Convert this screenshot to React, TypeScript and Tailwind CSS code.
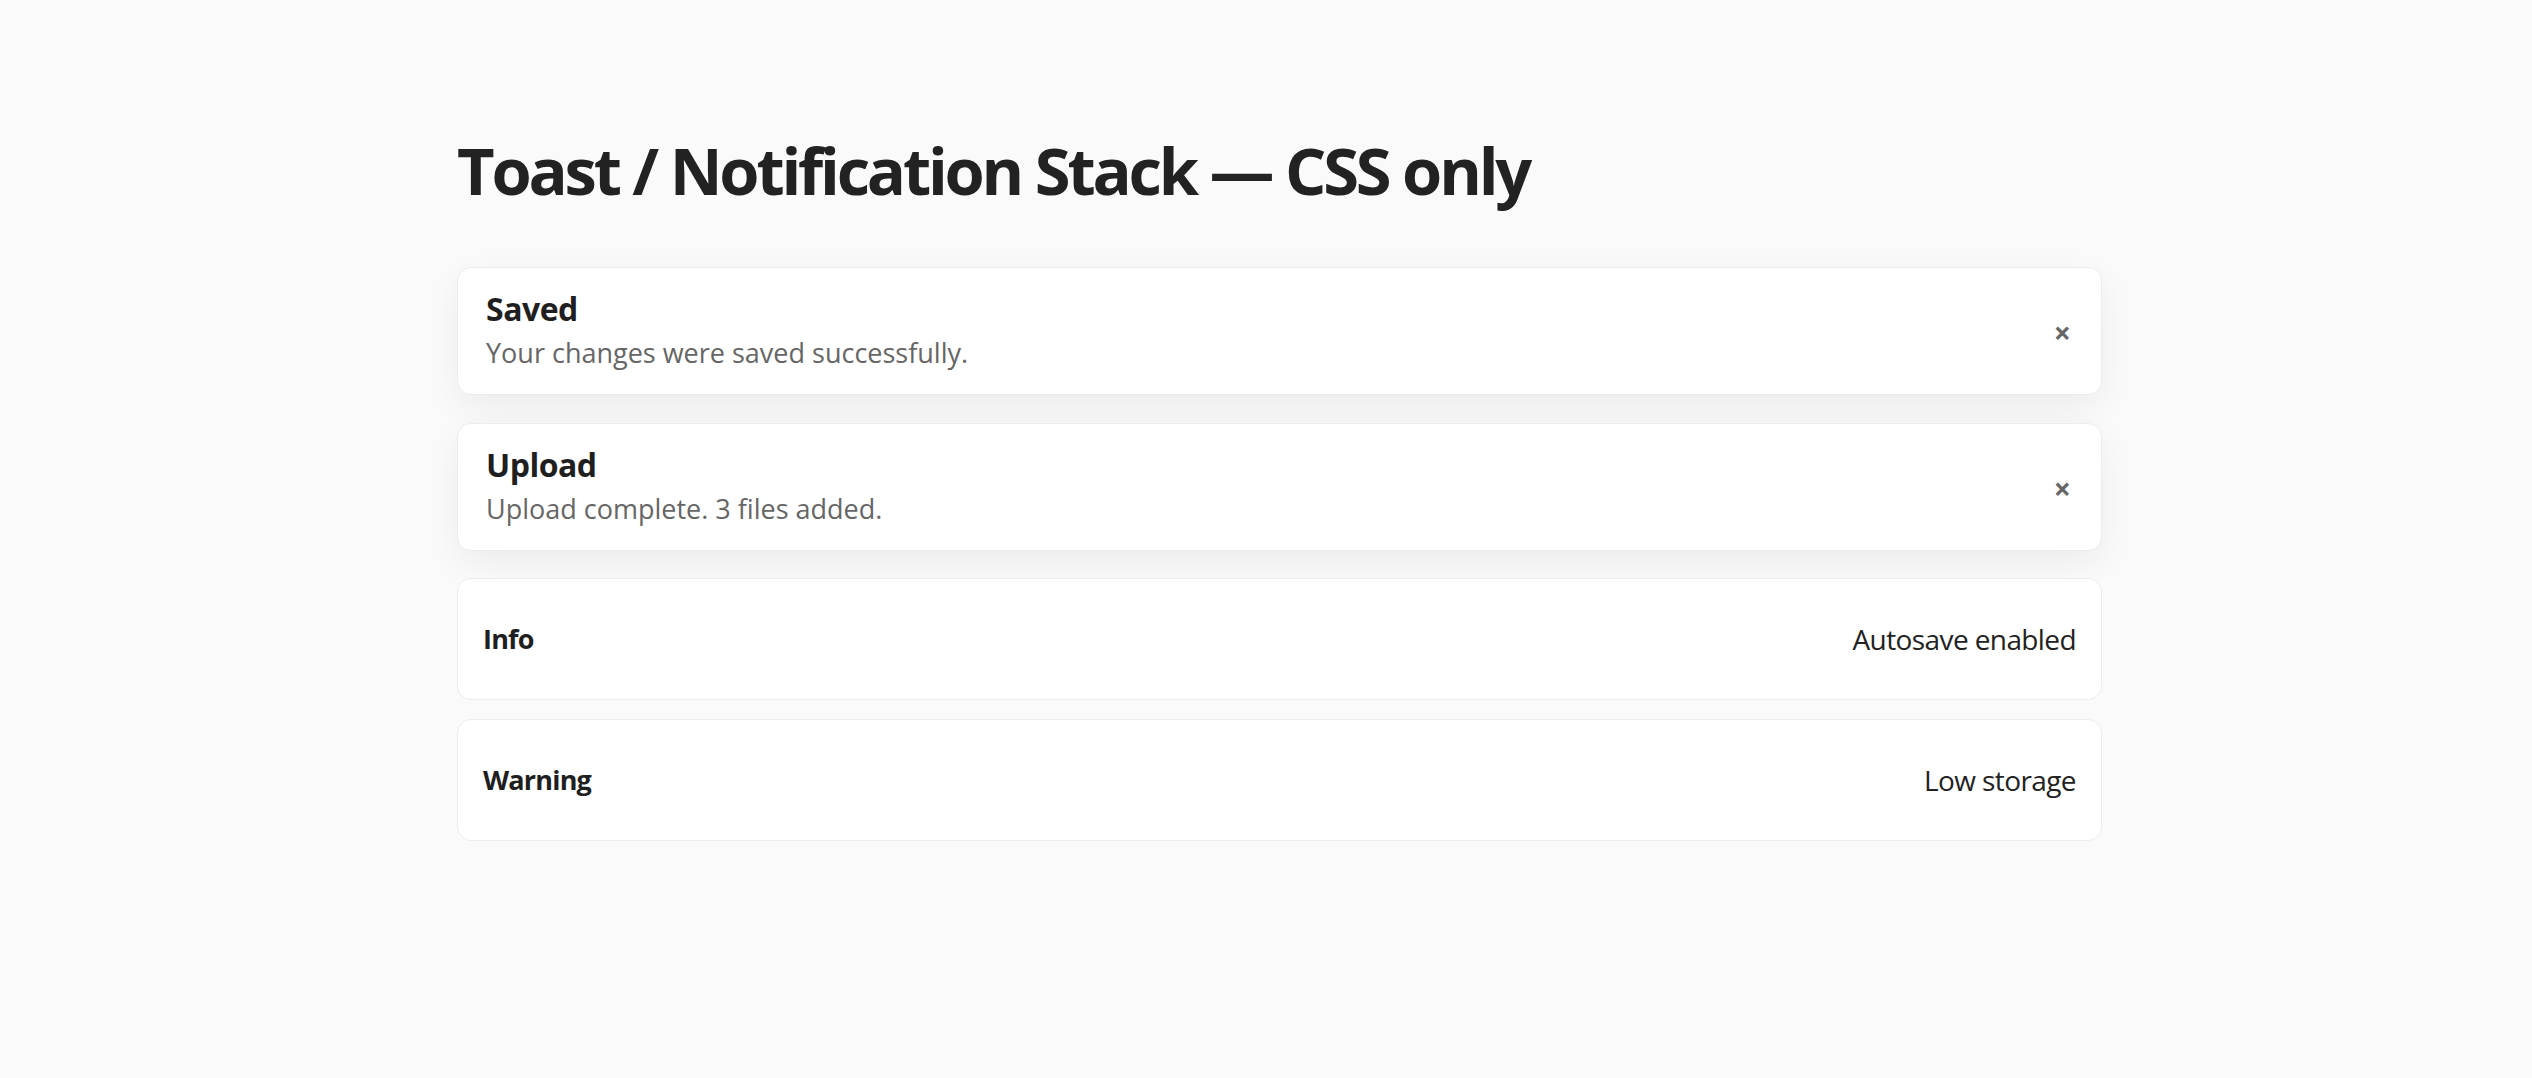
const toasts = [
  { title: "Saved", body: "Your changes were saved successfully." },
  { title: "Upload", body: "Upload complete. 3 files added." },
];

const rows = [
  { label: "Info", value: "Autosave enabled" },
  { label: "Warning", value: "Low storage" },
];

export default function App() {
  return (
    <div className="min-h-[1078px] w-full bg-[#fafafa] text-[#222] font-['Open_Sans',sans-serif]">
      <div className="ml-[457px] w-[1645px] pt-[131px]">
        <h1 className="text-[65px] leading-[78px] font-bold tracking-[-3.2px] text-[#222]">
          Toast / Notification Stack — CSS only
        </h1>

        <div className="mt-[58px] flex flex-col gap-[28px]">
          {toasts.map((t) => (
            <div
              key={t.title}
              className="flex items-center justify-between rounded-[14px] border border-[#ececec] bg-white pl-[28px] pr-[30px] pt-[21px] pb-[22px] shadow-[0_12px_36px_rgba(0,0,0,0.06)]"
            >
              <div>
                <div className="text-[32px] leading-[40px] font-bold tracking-[-0.5px] text-[#1f1f1f]">{t.title}</div>
                <div className="mt-[5px] text-[27px] leading-[38px] text-[#666]">{t.body}</div>
              </div>
              <button className="mt-[4px] text-[30px] leading-none font-bold text-[#666]">×</button>
            </div>
          ))}
        </div>

        <div className="mt-[27px] flex flex-col gap-[19px]">
          {rows.map((r) => (
            <div
              key={r.label}
              className="flex h-[122px] items-center justify-between rounded-[14px] border border-[#ececec] bg-white pl-[25px] pr-[25px]"
            >
              <span className="text-[27px] font-bold tracking-[-0.8px] text-[#1f1f1f]">{r.label}</span>
              <span className="text-[28px] tracking-[-0.6px] text-[#222]">{r.value}</span>
            </div>
          ))}
        </div>
      </div>
    </div>
  );
}
